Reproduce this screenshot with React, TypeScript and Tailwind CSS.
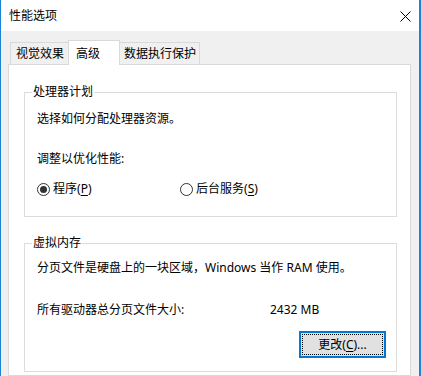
const font = { fontFamily: '"Noto Sans", "Noto Sans CJK SC", sans-serif' };

function Radio({ checked, label, hotkey }: { checked: boolean; label: string; hotkey: string }) {
  return (
    <div className="flex items-center h-4">
      <svg width="13" height="13" viewBox="0 0 13 13" className="shrink-0">
        <circle cx="6.5" cy="6.5" r="6" fill="white" stroke="#333" strokeWidth="1" />
        {checked && <circle cx="6.5" cy="6.5" r="3.5" fill="#333" />}
      </svg>
      <span className="ml-[3px]">
        {label}(<span className="underline underline-offset-2">{hotkey}</span>)
      </span>
    </div>
  );
}

export default function App() {
  return (
    <div
      className="w-[421px] h-[376px] overflow-hidden flex flex-col border-l border-r-2 border-[#1883d7] text-black text-[12px] leading-4"
      style={font}
    >
      {/* Title bar */}
      <div className="h-[31px] shrink-0 bg-white flex items-center justify-between pl-[8px] pr-[8px]">
        <span>性能选项</span>
        <svg width="11" height="11" viewBox="0 0 11 11" className="mt-[1px]">
          <path d="M0.5 0.5 L10.5 10.5 M10.5 0.5 L0.5 10.5" stroke="#000" strokeWidth="1" />
        </svg>
      </div>

      {/* Body */}
      <div className="flex-1 bg-[#f0f0f0] pt-[9px] pl-[7px] pr-[8px] flex flex-col">
        {/* Tabs */}
        <div className="flex items-start pl-[2px] h-[24px] relative z-10">
          <div className="mt-[2px] h-[22px] w-[58px] border-l border-t border-[#d9d9d9] bg-[#f0f0f0] pl-[5px] pt-[3px]">
            视觉效果
          </div>
          <div className="h-[25px] w-[52px] border-l border-t border-r border-[#d9d9d9] bg-white pl-[7px] pt-[5px]">
            高级
          </div>
          <div className="mt-[2px] h-[22px] w-[80px] border-t border-r border-[#d9d9d9] bg-[#f0f0f0] pl-[4px] pt-[3px]">
            数据执行保护
          </div>
        </div>

        {/* Panel */}
        <div className="flex-1 bg-white border border-[#d9d9d9] pl-[15px] pr-[13px]">
          <fieldset className="mt-[19px] border border-[#dcdcdc]">
            <legend className="ml-[7px] px-[1px] h-4">处理器计划</legend>
            <div className="pl-[12px] pb-[19px]">
              <div className="mt-[11px]">选择如何分配处理器资源。</div>
              <div className="mt-[24px]">调整以优化性能:</div>
              <div className="mt-[14px] flex">
                <div className="w-[143px]">
                  <Radio checked label="程序" hotkey="P" />
                </div>
                <Radio checked={false} label="后台服务" hotkey="S" />
              </div>
            </div>
          </fieldset>

          <fieldset className="mt-[18px] border border-[#dcdcdc]">
            <legend className="ml-[7px] px-[1px] h-4">虚拟内存</legend>
            <div className="pl-[12px] pb-[13px]">
              <div className="mt-[9px]">分页文件是硬盘上的一块区域，Windows 当作 RAM 使用。</div>
              <div className="mt-[26px] flex">
                <span className="w-[233px]">所有驱动器总分页文件大小:</span>
                <span>2432 MB</span>
              </div>
              <div className="mt-[13px] flex justify-end pr-[10px]">
                <button className="w-[87px] h-[27px] bg-[#e1e1e1] border-2 border-[#0078d7] p-[1px]">
                  <div className="w-full h-full border border-dotted border-black flex items-center justify-center">
                    <span>
                      更改(<span className="underline underline-offset-2">C</span>)...
                    </span>
                  </div>
                </button>
              </div>
            </div>
          </fieldset>
        </div>
      </div>
    </div>
  );
}
